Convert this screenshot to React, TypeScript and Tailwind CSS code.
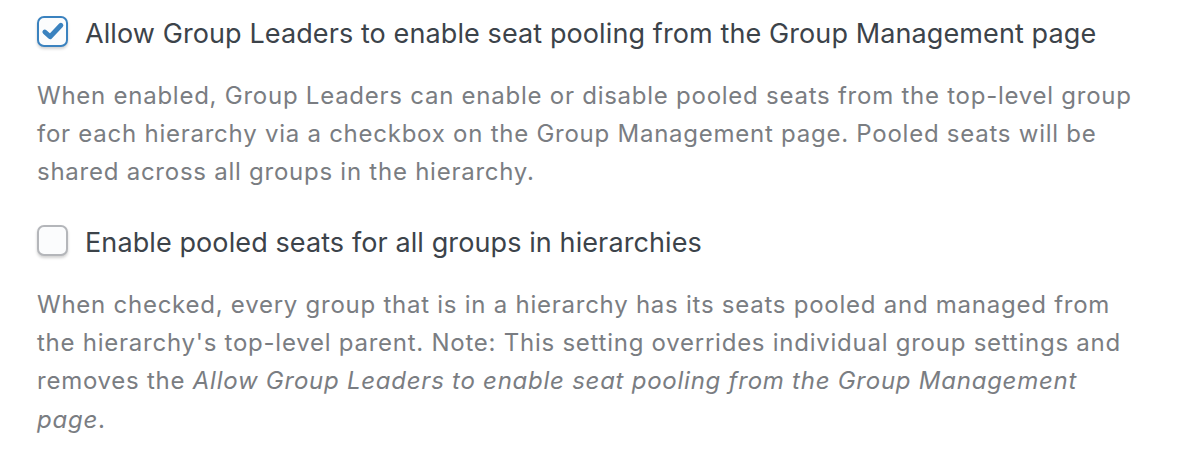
import React from "react";

type OptionProps = {
  checked: boolean;
  label: string;
  children: React.ReactNode;
};

const CheckBox: React.FC<{ checked: boolean }> = ({ checked }) => (
  <span
    className={`mb-[6px] flex h-[31px] w-[31px] shrink-0 items-center justify-center rounded-[7px] border-2 bg-[#fbfcfd] shadow-[0_2px_3px_rgba(0,0,0,0.18)] ${
      checked ? "border-[#3a82bf]" : "border-[#b4b6ba]"
    }`}
  >
    {checked && (
      <svg width="24" height="24" viewBox="0 0 20 20">
        <path
          d="M3.2 10.8 L7.6 14.8 L16.6 5.2"
          fill="none"
          stroke="#3a82bf"
          strokeWidth="4"
          strokeLinecap="round"
          strokeLinejoin="round"
        />
      </svg>
    )}
  </span>
);

const Option: React.FC<OptionProps> = ({ checked, label, children }) => {
  return (
    <div className="flex flex-col">
      <label className="flex items-center gap-[17px]">
        <CheckBox checked={checked} />
        <span className="text-[27px] tracking-[0.1px] text-[#3c434a]">{label}</span>
      </label>
      <p className="mt-[22px] text-[24px] leading-[38.3px] tracking-[0.75px] text-[#7a7d82]">
        {children}
      </p>
    </div>
  );
};

export default function App() {
  return (
    <div
      className="flex h-[464px] w-[1180px] flex-col gap-[32px] bg-white pl-[37px] pt-[14px]"
      style={{ fontFamily: "Inter, 'Noto Sans', sans-serif" }}
    >
      <Option
        checked
        label="Allow Group Leaders to enable seat pooling from the Group Management page"
      >
        When enabled, Group Leaders can enable or disable pooled seats from the
        top-level group
        <br />
        for each hierarchy via a checkbox on the Group Management page. Pooled
        seats will be
        <br />
        shared across all groups in the hierarchy.
      </Option>
      <Option checked={false} label="Enable pooled seats for all groups in hierarchies">
        When checked, every group that is in a hierarchy has its seats pooled
        and managed from
        <br />
        the hierarchy's top-level parent. Note: This setting overrides individual
        group settings and
        <br />
        removes the{" "}
        <em>Allow Group Leaders to enable seat pooling from the Group Management</em>
        <br />
        <em>page</em>.
      </Option>
    </div>
  );
}
